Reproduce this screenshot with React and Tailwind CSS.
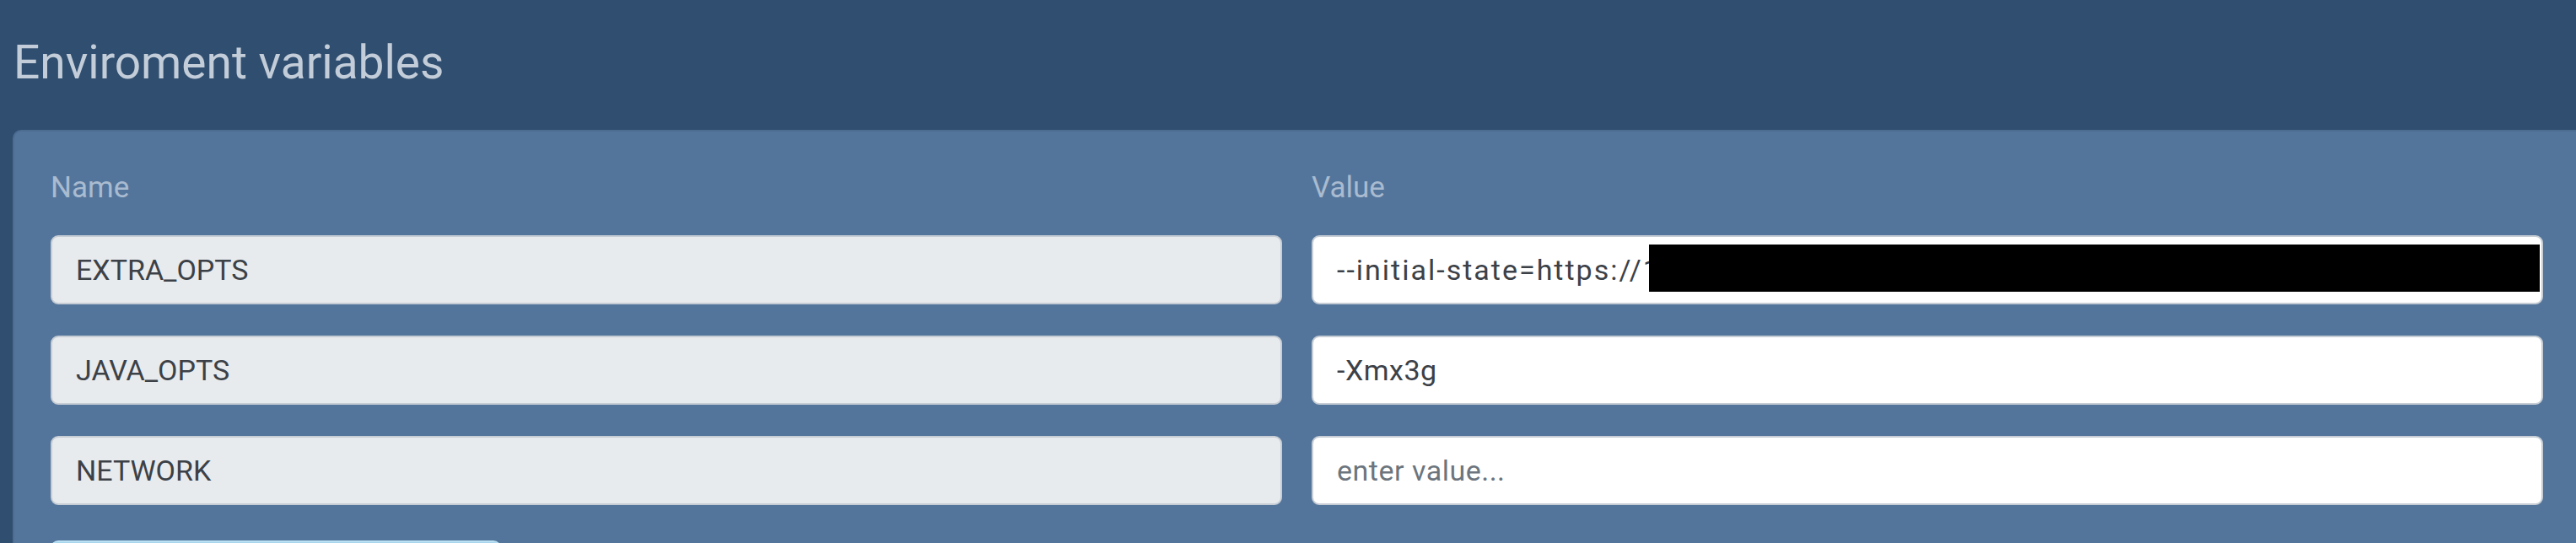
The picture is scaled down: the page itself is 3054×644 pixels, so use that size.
export default function App() {
  const rows = [
    { name: "EXTRA_OPTS", value: "--initial-state=https://1", redacted: true },
    { name: "JAVA_OPTS", value: "-Xmx3g" },
    { name: "NETWORK", value: "" },
  ];
  return (
    <div
      className="w-[3054px] h-[644px] overflow-hidden bg-[#304e6f]"
      style={{ fontFamily: "Roboto, 'Open Sans', sans-serif" }}
    >
      <div className="pt-[47px] pl-[16px] h-[154px]">
        <h1 className="text-[55px] leading-[55px] font-normal text-[#c3cdd9] m-0">
          Enviroment variables
        </h1>
      </div>
      <div className="ml-[15px] w-[3043px] bg-[#54759b] rounded-tl-[10px] border-t-2 border-l-2 border-[#4d6c92] pt-[49px] px-[43px]">
        <div className="grid grid-cols-2 gap-x-[35px]">
          <div className="text-[35px] leading-[35px] text-[#a9bbd0]">Name</div>
          <div className="text-[35px] leading-[35px] text-[#a9bbd0]">Value</div>
        </div>
        <div className="mt-[39px] flex flex-col gap-[37px]">
          {rows.map((r) => (
            <div key={r.name} className="grid grid-cols-2 gap-x-[35px]">
              <div className="h-[82px] rounded-[9px] border-2 border-[#c6cdd5] bg-[#e8ebee] flex items-center pl-[28px] text-[34px] text-[#3c4147]">
                {r.name}
              </div>
              <div className="relative h-[82px] rounded-[9px] border-2 border-[#c6cdd5] bg-white flex items-center pl-[28px] text-[34px] overflow-hidden">
                {r.value ? (
                  <span
                    className={
                      r.redacted
                        ? "text-[#3c4147] whitespace-nowrap tracking-[2px]"
                        : "text-[#3c4147] whitespace-nowrap tracking-[0.5px]"
                    }
                  >
                    {r.value}
                  </span>
                ) : (
                  <span className="text-[#6c757d] tracking-[0.5px]">enter value...</span>
                )}
                {r.redacted && (
                  <div className="absolute left-[398px] right-[2px] top-[9px] h-[56px] bg-black" />
                )}
              </div>
            </div>
          ))}
        </div>
        <div className="mt-[42px] w-[534px] h-[80px] rounded-[9px] bg-[#a6d5ec] border-t-2 border-[#b9e1f3]" />
      </div>
    </div>
  );
}
